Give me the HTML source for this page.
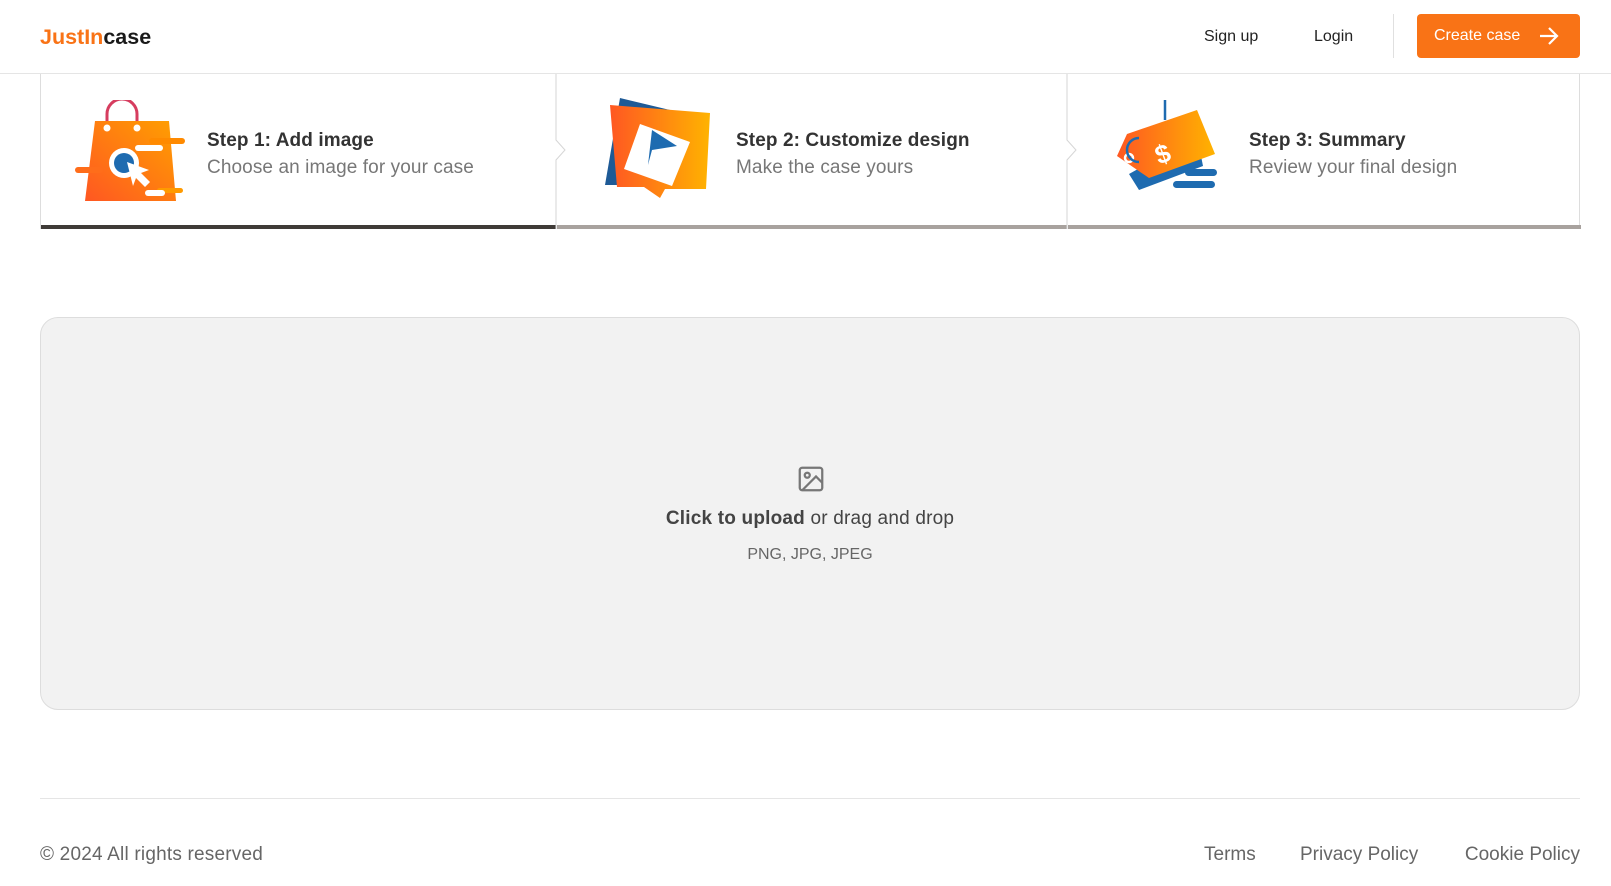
<!DOCTYPE html>
<html><head><meta charset="utf-8"><style>
*{margin:0;padding:0;box-sizing:border-box}
body{width:1611px;height:886px;background:#fff;font-family:"Liberation Sans",sans-serif;color:#333;position:relative;overflow:hidden}
.hdr{position:absolute;left:0;top:0;width:1611px;height:74px;border-bottom:1px solid #e5e5e5}
.logo{position:absolute;left:40px;top:25px;font-size:21.5px;font-weight:bold;color:#1a1a1a}
.logo span{color:#f97316}
.nav{position:absolute;top:28px;font-size:16px;color:#222}
.sep{position:absolute;left:1393px;top:14px;width:1px;height:44px;background:#e0e0e0}
.btn{position:absolute;left:1417px;top:14px;width:163px;height:44px;background:#f97316;border-radius:4px;color:#fff;font-size:16px;padding:13px 0 0 17px}
.steps{position:absolute;left:40px;top:74px;width:1540px;height:155px;border-left:1px solid #ddd;border-right:1px solid #ddd}
.step{position:absolute;top:0;height:155px}
.bar{position:absolute;bottom:0;left:0;right:0;height:4px;background:#a8a29e}
.t1{position:absolute;font-size:19px;font-weight:bold;color:#333;top:56px;letter-spacing:0.1px}
.t2{position:absolute;font-size:19px;color:#777;top:83px;letter-spacing:0.1px}
.vsep{position:absolute;top:0;height:155px;width:20px}
.drop{position:absolute;left:40px;top:317px;width:1540px;height:393px;background:#f2f2f2;border:1px solid #ddd;border-radius:18px}
.foot{position:absolute;left:40px;top:798px;width:1540px;height:1px;background:#e5e5e5}
.ft{position:absolute;top:844px;font-size:19px;color:#666}
</style></head><body>
<div class="hdr">
<div class="logo"><span>JustIn</span>case</div>
<div class="nav" style="left:1204px">Sign up</div>
<div class="nav" style="left:1314px">Login</div>
<div class="sep"></div>
<div class="btn">Create case <svg style="position:absolute;left:122px;top:13px" width="20" height="18" viewBox="0 0 20 18"><path d="M1 9h17M10 1l8 8-8 8" stroke="#fff" stroke-width="2.2" fill="none"/></svg></div>
</div>
<div class="steps">
<div class="step" style="left:0;width:515px"><div class="bar" style="background:#3f3b37"></div>
<svg style="position:absolute;left:34px;top:26px" width="112" height="106" viewBox="0 0 112 106">
<defs><linearGradient id="g1" x1="0" y1="1" x2="1" y2="0"><stop offset="0" stop-color="#ff5722"/><stop offset="1" stop-color="#ffa000"/></linearGradient></defs>
<path d="M32 26V14a15 15 0 0 1 30 0v12" stroke="#d63d5f" stroke-width="3" fill="none"/>
<path d="M20 21h74l7 80H10z" fill="url(#g1)"/>
<circle cx="32" cy="28" r="3.5" fill="#fff"/><circle cx="62" cy="28" r="3.5" fill="#fff"/>
<rect x="74" y="38" width="36" height="6" rx="3" fill="#ff8a00"/><rect x="0" y="67" width="28" height="6" rx="3" fill="#ff6d1a"/><rect x="82" y="88" width="26" height="5" rx="2.5" fill="#ff9a00"/>
<rect x="60" y="45" width="28" height="6" rx="3" fill="#fff"/><rect x="70" y="90" width="20" height="6" rx="3" fill="#fff"/>
<circle cx="49" cy="63" r="15" fill="#fff"/><circle cx="49" cy="63" r="10" fill="#1e6bb0"/>
<path d="M52 62l22 8-8 3 9 9-5 5-9-9-3 8z" fill="#fff"/>
</svg>
<div class="t1" style="left:166px">Step 1: Add image</div><div class="t2" style="left:166px">Choose an image for your case</div></div>
<svg class="vsep" style="left:505px" viewBox="0 0 20 155" width="20" height="155"><path d="M10 0v66l9 10-9 10v69" stroke="#d6d6d6" fill="none"/></svg>
<div class="step" style="left:516px;width:510px"><div class="bar"></div>
<svg style="position:absolute;left:48px;top:24px" width="110" height="106" viewBox="0 0 110 106">
<defs><linearGradient id="g3" x1="0" x2="1"><stop offset="0" stop-color="#ff5722"/><stop offset="1" stop-color="#ffb300"/></linearGradient></defs>
<path d="M15 0l50 12-40 75H0z" fill="#1e5a96"/>
<path d="M5 7l100 8-4 76H60l-5 9-16-11H12z" fill="url(#g3)"/>
<path d="M35 34l50 18-18 44-48-17z" fill="#fff" transform="translate(0,-8)"/>
<path d="M55 44l25 16-25 4-4 15z" fill="#1e6bb0" transform="translate(-8,-12)"/>
</svg>
<div class="t1" style="left:179px">Step 2: Customize design</div><div class="t2" style="left:179px">Make the case yours</div></div>
<svg class="vsep" style="left:1016px" viewBox="0 0 20 155" width="20" height="155"><path d="M10 0v66l9 10-9 10v69" stroke="#d6d6d6" fill="none"/></svg>
<div class="step" style="left:1027px;width:513px"><div class="bar"></div>
<svg style="position:absolute;left:39px;top:22px" width="110" height="106" viewBox="0 0 110 106">
<defs><linearGradient id="g4" x1="0" x2="1"><stop offset="0" stop-color="#ff5722"/><stop offset="1" stop-color="#ffb300"/></linearGradient></defs>
<path d="M58 4v20" stroke="#1e6bb0" stroke-width="2.5"/>
<path d="M22 78l10 16 64-24-6-30z" fill="#1e6bb0"/>
<rect x="78" y="73" width="32" height="7" rx="3.5" fill="#1e6bb0"/><rect x="66" y="85" width="42" height="7" rx="3.5" fill="#1e6bb0"/>
<path d="M10 60l10-22 70-24 18 44-66 24z" fill="url(#g4)"/>
<circle cx="22" cy="62" r="4" fill="none" stroke="#fff" stroke-width="2.5"/>
<path d="M32 42a12 12 0 1 0 0 24" stroke="#1e6bb0" stroke-width="2.5" fill="none"/>
<text x="48" y="66" font-family="Liberation Sans" font-weight="bold" font-size="26" fill="#fff" transform="rotate(-20 58 56)">$</text>
</svg>
<div class="t1" style="left:181px">Step 3: Summary</div><div class="t2" style="left:181px">Review your final design</div></div>
</div>
<div class="drop">
<svg style="position:absolute;left:755px;top:146px" width="30" height="30" viewBox="0 0 24 24"><rect x="3" y="3" width="18" height="18" rx="2" stroke="#777" stroke-width="1.8" fill="none"/><circle cx="9" cy="9" r="2" stroke="#777" stroke-width="1.8" fill="none"/><path d="M21 15l-5-5L5 21" stroke="#777" stroke-width="1.8" fill="none"/></svg>
<div style="position:absolute;left:0;right:0;top:190px;text-align:center;font-size:19px;color:#444;letter-spacing:0.2px"><b>Click to upload</b> or drag and drop</div>
<div style="position:absolute;left:0;right:0;top:228px;text-align:center;font-size:16px;color:#666">PNG, JPG, JPEG</div>
</div>
<div class="foot"></div>
<div class="ft" style="left:40px;letter-spacing:0.2px">© 2024 All rights reserved</div>
<div class="ft" style="left:1204px">Terms</div>
<div class="ft" style="left:1300px">Privacy Policy</div>
<div class="ft" style="right:31px">Cookie Policy</div>
</body></html>
